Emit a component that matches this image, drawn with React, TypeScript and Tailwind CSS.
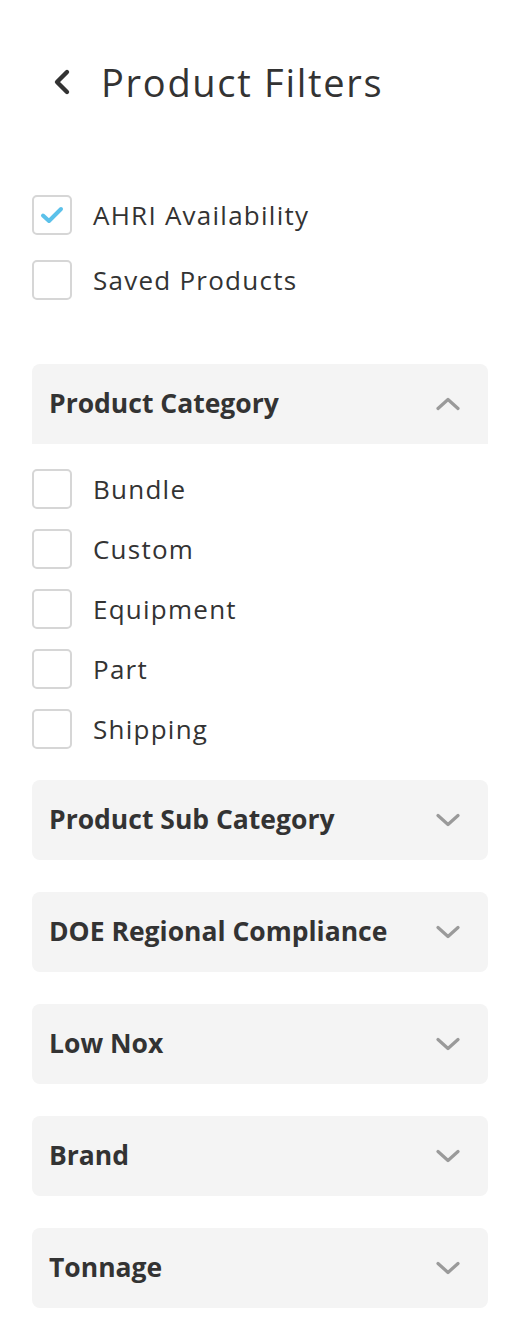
import { ChevronLeft } from "lucide-react";

// Filter sidebar: back header, quick toggles, collapsible filter groups

const font = { fontFamily: "'Open Sans', 'Lato', sans-serif" };

function Check({ checked }: { checked?: boolean }) {
  return (
    <span className="flex h-10 w-10 shrink-0 items-center justify-center rounded-[5px] border-2 border-[#d6d6d6] bg-white">
      {checked && (
        <svg width="24" height="18" viewBox="0 0 24 18" fill="none">
          <path
            d="M3 9.5l6 5.5L21 3"
            stroke="#5bc1ea"
            strokeWidth="4"
            strokeLinecap="round"
            strokeLinejoin="round"
          />
        </svg>
      )}
    </span>
  );
}

function Caret({ up }: { up?: boolean }) {
  return (
    <svg width="24" height="14" viewBox="0 0 24 14" fill="none" className={up ? "rotate-180" : ""}>
      <path d="M2 2.5l10 9 10-9" stroke="#9a9a9a" strokeWidth="3.2" strokeLinecap="round" strokeLinejoin="round" />
    </svg>
  );
}

function Option({ label, checked }: { label: string; checked?: boolean }) {
  return (
    <label className="flex h-10 items-center gap-[21px] text-[26px] tracking-[0.048em] text-[#333]">
      <Check checked={checked} />
      <span>{label}</span>
    </label>
  );
}

function Group({ title, open }: { title: string; open?: boolean }) {
  return (
    <div
      className={`flex h-20 items-center justify-between bg-[#f4f4f4] pl-[17px] pr-[28px] ${
        open ? "rounded-t-lg" : "rounded-lg"
      }`}
    >
      <span className="text-[26.5px] font-bold text-[#333]">{title}</span>
      <Caret up={open} />
    </div>
  );
}

export default function App() {
  const categories = ["Bundle", "Custom", "Equipment", "Part", "Shipping"];
  const groups = ["Product Sub Category", "DOE Regional Compliance", "Low Nox", "Brand", "Tonnage"];

  return (
    <div className="min-h-screen bg-white px-8 pb-8" style={font}>
      {/* Header */}
      <div className="flex h-[164px] items-start pt-[58px]">
        <div className="flex items-center gap-[19px]">
          <ChevronLeft size={40} strokeWidth={2.6} className="ml-[10px] text-[#333]" />
          <h1 className="text-[38px] leading-[48px] tracking-[0.045em] text-[#333]">Product Filters</h1>
        </div>
      </div>

      {/* Quick toggles */}
      <div className="mt-[31px] flex flex-col gap-[25px]">
        <Option label="AHRI Availability" checked />
        <Option label="Saved Products" />
      </div>

      {/* Product Category (expanded) */}
      <div className="mt-[64px]">
        <Group title="Product Category" open />
        <div className="mt-[25px] flex flex-col gap-5">
          {categories.map((c) => (
            <Option key={c} label={c} />
          ))}
        </div>
      </div>

      {/* Collapsed groups */}
      <div className="mt-[31px] flex flex-col gap-8">
        {groups.map((g) => (
          <Group key={g} title={g} />
        ))}
      </div>
    </div>
  );
}
